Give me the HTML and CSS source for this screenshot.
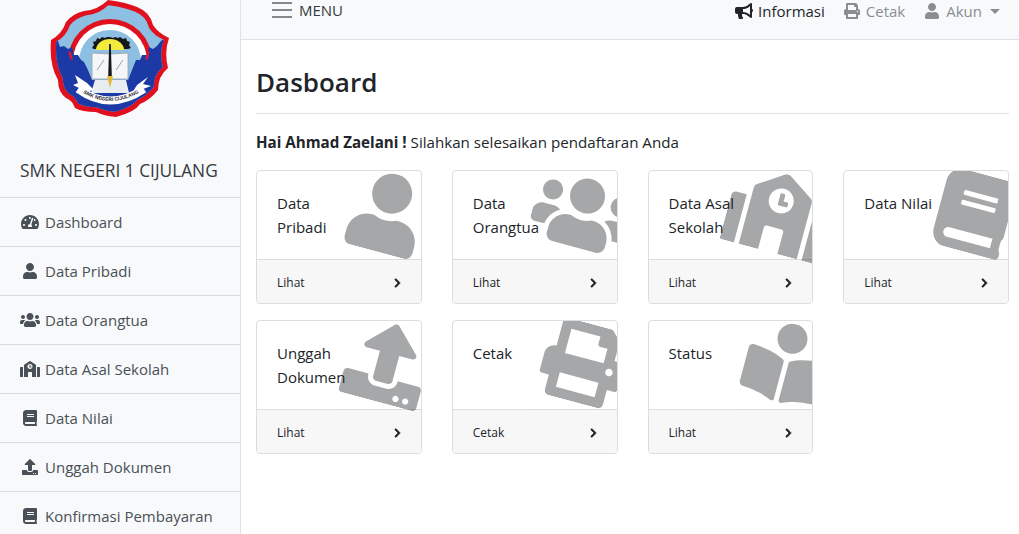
FILE: index.html
```html
<!DOCTYPE html>
<html lang="id">
<head>
<meta charset="utf-8">
<title>Dasboard</title>
<link rel="stylesheet" href="styles.css">
</head>
<body>
<svg class="defs" aria-hidden="true">
  <symbol id="i-user" viewBox="0 0 448 512"><path d="M224 256c70.7 0 128-57.3 128-128S294.7 0 224 0 96 57.3 96 128s57.3 128 128 128zm89.6 32h-16.7c-22.2 10.2-46.9 16-72.9 16s-50.6-5.8-72.9-16h-16.7C60.2 288 0 348.2 0 422.4V464c0 26.5 21.5 48 48 48h352c26.5 0 48-21.5 48-48v-41.6c0-74.2-60.2-134.4-134.4-134.4z"/></symbol>
  <symbol id="i-users" viewBox="0 0 640 512"><path d="M96 224c35.3 0 64-28.7 64-64s-28.7-64-64-64-64 28.7-64 64 28.7 64 64 64zm448 0c35.3 0 64-28.7 64-64s-28.7-64-64-64-64 28.7-64 64 28.7 64 64 64zm32 32h-64c-17.6 0-33.5 7.1-45.1 18.6 40.3 22.1 68.9 62 75.1 109.4h66c17.7 0 32-14.3 32-32v-32c0-35.3-28.7-64-64-64zm-256 0c61.9 0 112-50.1 112-112S381.9 32 320 32 208 82.1 208 144s50.1 112 112 112zm76.8 32h-8.3c-20.8 10-43.9 16-68.5 16s-47.6-6-68.5-16h-8.3C179.6 288 128 339.6 128 403.2V432c0 26.5 21.5 48 48 48h288c26.5 0 48-21.5 48-48v-28.8c0-63.6-51.6-115.2-115.2-115.2zm-223.7-13.4C161.5 263.1 145.6 256 128 256H64c-35.3 0-64 28.7-64 64v32c0 17.7 14.3 32 32 32h65.9c6.3-47.4 34.9-87.3 75.2-109.4z"/></symbol>
  <symbol id="i-book" viewBox="0 0 448 512"><path d="M448 360V24c0-13.3-10.7-24-24-24H96C43 0 0 43 0 96v320c0 53 43 96 96 96h328c13.3 0 24-10.7 24-24v-16c0-7.5-3.5-14.3-8.9-18.7-4.2-15.4-4.2-59.3 0-74.7 5.4-4.3 8.9-11.1 8.9-18.6zM128 134c0-3.3 2.7-6 6-6h212c3.3 0 6 2.7 6 6v20c0 3.3-2.7 6-6 6H134c-3.3 0-6-2.7-6-6v-20zm0 64c0-3.3 2.7-6 6-6h212c3.3 0 6 2.7 6 6v20c0 3.3-2.7 6-6 6H134c-3.3 0-6-2.7-6-6v-20zm253.4 250H96c-17.7 0-32-14.3-32-32 0-17.6 14.4-32 32-32h285.4c-1.9 17.1-1.9 46.9 0 64z"/></symbol>
  <symbol id="i-print" viewBox="0 0 512 512"><path d="M448 192V77.25c0-8.49-3.37-16.62-9.37-22.63L393.37 9.37c-6-6-14.14-9.37-22.63-9.37H96C78.33 0 64 14.33 64 32v160c-35.35 0-64 28.65-64 64v112c0 8.84 7.16 16 16 16h48v96c0 17.67 14.33 32 32 32h320c17.67 0 32-14.33 32-32v-96h48c8.84 0 16-7.16 16-16V256c0-35.35-28.65-64-64-64zm-64 256H128v-96h256v96zm0-224H128V64h192v48c0 8.84 7.16 16 16 16h48v96zm48 72c-13.25 0-24-10.75-24-24 0-13.26 10.75-24 24-24s24 10.74 24 24c0 13.25-10.75 24-24 24z"/></symbol>
  <symbol id="i-upload" viewBox="0 0 512 512"><path d="M296 384h-80c-13.3 0-24-10.7-24-24V192h-87.7c-17.8 0-26.7-21.5-14.1-34.1L242.3 5.7c7.5-7.5 19.8-7.5 27.3 0l152.2 152.2c12.6 12.6 3.7 34.1-14.1 34.1H320v168c0 13.3-10.7 24-24 24zm216-8v112c0 13.3-10.7 24-24 24H24c-13.3 0-24-10.7-24-24V376c0-13.3 10.7-24 24-24h136v8c0 30.9 25.1 56 56 56h80c30.9 0 56-25.1 56-56v-8h136c13.3 0 24 10.7 24 24zm-124 88c0-11-9-20-20-20s-20 9-20 20 9 20 20 20 20-9 20-20zm64 0c0-11-9-20-20-20s-20 9-20 20 9 20 20 20 20-9 20-20z"/></symbol>
  <symbol id="i-school" viewBox="0 0 640 512"><path d="M0 224v272c0 8.84 7.16 16 16 16h80V192H32c-17.67 0-32 14.33-32 32zm360-48h-24v-40c0-4.42-3.58-8-8-8h-16c-4.42 0-8 3.58-8 8v64c0 4.42 3.58 8 8 8h48c4.42 0 8-3.58 8-8v-16c0-4.42-3.58-8-8-8zm137.75-63.96l-160-106.67a32.02 32.02 0 0 0-35.5 0l-160 106.67A32.002 32.002 0 0 0 128 138.66V512h128V368c0-8.84 7.16-16 16-16h96c8.84 0 16 7.16 16 16v144h128V138.67c0-10.7-5.35-20.7-14.25-26.63zM320 256c-44.18 0-80-35.82-80-80s35.82-80 80-80 80 35.82 80 80-35.82 80-80 80zm288-64h-64v320h80c8.84 0 16-7.16 16-16V224c0-17.67-14.33-32-32-32z"/></symbol>
  <symbol id="i-reader" viewBox="0 0 512 512"><path d="M352 96c0-53.02-42.98-96-96-96s-96 42.98-96 96 42.98 96 96 96 96-42.98 96-96zM233.59 241.1c-59.33-36.32-155.43-46.3-203.79-49.05C13.55 191.13 0 203.51 0 219.14v222.8c0 14.33 11.59 26.28 26.49 27.05 43.66 2.29 131.99 10.68 193.04 41.43 9.37 4.72 20.48-1.71 20.48-11.87V252.56c-.01-4.67-2.32-8.95-6.42-11.46zm248.61-49.05c-48.35 2.74-144.46 12.73-203.78 49.05-4.1 2.51-6.41 6.96-6.41 11.63v245.79c0 10.19 11.14 16.63 20.54 11.9 61.04-30.72 149.32-39.11 192.97-41.4 14.9-.78 26.49-12.73 26.49-27.06V219.14c-.01-15.63-13.56-28.01-29.81-27.09z"/></symbol>
  <symbol id="i-gauge" viewBox="0 0 576 512"><path d="M288 32C128.94 32 0 160.94 0 320c0 52.8 14.25 102.26 39.06 144.8 5.61 9.62 16.3 15.2 27.44 15.2h443c11.14 0 21.83-5.58 27.44-15.2C561.75 422.26 576 372.8 576 320c0-159.06-128.94-288-288-288zm0 64c14.71 0 26.58 10.13 30.32 23.65-1.11 2.26-2.64 4.23-3.45 6.67l-9.22 27.67c-5.13 3.49-10.97 6.01-17.64 6.01-17.67 0-32-14.33-32-32S270.33 96 288 96zM96 384c-17.67 0-32-14.33-32-32s14.33-32 32-32 32 14.33 32 32-14.33 32-32 32zm48-160c-17.67 0-32-14.33-32-32s14.33-32 32-32 32 14.33 32 32-14.33 32-32 32zm246.77-72.41l-61.33 184C343.13 347.33 352 364.54 352 384c0 11.72-3.38 22.55-8.88 32H232.88c-5.5-9.45-8.88-20.28-8.88-32 0-33.94 26.5-61.43 59.9-63.59l61.34-184.01c4.17-12.56 17.73-19.45 30.36-15.17 12.57 4.19 19.35 17.79 15.17 30.36zm14.66 57.2l15.52-46.55c3.47-1.29 7.13-2.23 11.05-2.23 17.67 0 32 14.33 32 32s-14.33 32-32 32c-11.38-.01-20.89-6.28-26.57-15.22zM480 384c-17.67 0-32-14.33-32-32s14.33-32 32-32 32 14.33 32 32-14.33 32-32 32z"/></symbol>
  <symbol id="i-horn" viewBox="0 0 576 512"><path d="M576 240c0-23.63-12.95-44.04-32-55.12V32.01C544 23.26 537.02 0 512 0c-7.12 0-14.19 2.38-19.98 7.02l-85.03 68.03C364.28 109.19 310.66 128 256 128H64c-35.35 0-64 28.65-64 64v96c0 35.35 28.65 64 64 64h33.7c-1.39 10.48-2.18 21.14-2.18 32 0 39.77 9.26 77.35 25.56 110.94 5.19 10.69 16.52 17.06 28.4 17.06h74.28c26.05 0 41.69-29.84 25.9-50.56-16.4-21.52-26.15-48.36-26.15-77.44 0-11.11 1.62-21.79 4.41-32H256c54.66 0 108.28 18.81 150.98 52.95l85.03 68.03a32.023 32.023 0 0 0 19.98 7.02c24.92 0 32-22.78 32-32V295.13C563.05 284.04 576 263.63 576 240zm-96 141.42l-33.05-26.44C392.95 311.78 325.12 288 256 288v-96c69.12 0 136.95-23.78 190.95-66.98L480 98.58v282.84z"/></symbol>
  <symbol id="i-chev" viewBox="0 0 320 512"><path d="M285.476 272.971L91.132 467.314c-9.373 9.373-24.569 9.373-33.941 0l-22.667-22.667c-9.357-9.357-9.375-24.522-.04-33.901L188.505 256 34.484 101.255c-9.335-9.379-9.317-24.544.04-33.901l22.667-22.667c9.373-9.373 24.569-9.373 33.941 0L285.475 239.03c9.373 9.372 9.373 24.568.001 33.941z"/></symbol>
</svg>

<aside class="sidebar">
  <div class="brand">
    <svg class="logo" viewBox="50 0 120 118" role="img" aria-label="Logo SMK Negeri 1 Cijulang">
      <defs>
        <path id="shield" d="M108 0Q125 2 137 7Q150 12 153 25Q158 33 169 38Q164 52 168 68Q158 76 158 90Q150 100 140 104Q135 112 116 117Q104 116 96 112Q82 112 75 108Q72 100 66 98Q58 92 58 80Q49 65 51 40Q62 34 66 22Q72 14 84 11Q98 10 108 0Z"/>
        <clipPath id="inner"><use href="#shield" transform="translate(110 58) scale(.91) translate(-110 -58)"/></clipPath>
        <path id="arc" d="M80 91Q110 111 142 91"/>
      </defs>
      <use href="#shield" fill="#e0101e"/>
      <g clip-path="url(#inner)">
        <rect x="50" y="0" width="120" height="118" fill="#8cbfe2"/>
        <circle cx="110" cy="61" r="42" fill="#e0101e"/>
        <circle cx="110" cy="61" r="37" fill="#fff"/>
        <circle cx="110" cy="61" r="31" fill="#8cbfe2"/>
        <path fill="#1c3aa6" d="M50 38L58 41L60 47L64 46L68 49L72 47L74 55L78 55L81 60L84 62L88 70L92 80L128 80L132 70L136 60L140 60L142 55L147 55L149 47L153 49L157 46L161 41L168 36L172 118L50 118Z"/>
        <path fill="#d01c3a" d="M68 51l3 1 2 8-3-1zM150 51l-3 1-2 8 3-1z"/>
      </g>
      <path fill="#16181c" d="M92 48l2-3-1-3 3-1 1-3 3 1 2-2 3 1 2-1 3 0 3 1 2-1 3 1 2-1 3 2 3-1 1 3 3 1-1 3 2 3-3 1-34 0z"/>
      <path fill="#f3ea3e" d="M96 50a14 11 0 0 1 28 0z"/>
      <path fill="#f4f6f8" stroke="#9aa0a8" stroke-width=".8" d="M92 53l18 1 18-1v26H92z"/>
      <path stroke="#9aa0a8" fill="none" d="M97 70l7-10M116 70l7-10"/>
      <path fill="#e8edf2" d="M95 80h31l3 13H91z"/>
      <path fill="#16181c" d="M109.2 44h1.6l1 32h-3.6z"/>
      <path fill="#e4b93a" d="M107 76h6l-3 12z"/>
      <path fill="#fff" d="M75 75l12 8 7 7-14 3-1-5-6-3 5-2zM148 77l-5 7 8 2-8 3 1 5-12-1 5-8z"/>
      <path d="M78 89Q110 112 144 89" fill="none" stroke="#fff" stroke-width="8"/>
      <text class="logo-text"><textPath href="#arc" startOffset="50%" text-anchor="middle">SMK NEGERI CIJULANG</textPath></text>
    </svg>
    <div class="school">SMK NEGERI 1 CIJULANG</div>
  </div>
  <nav class="menu">
    <a class="menu-item"><svg class="mi"><use href="#i-gauge"/></svg>Dashboard</a>
    <a class="menu-item"><svg class="mi"><use href="#i-user"/></svg>Data Pribadi</a>
    <a class="menu-item"><svg class="mi"><use href="#i-users"/></svg>Data Orangtua</a>
    <a class="menu-item"><svg class="mi"><use href="#i-school"/></svg>Data Asal Sekolah</a>
    <a class="menu-item"><svg class="mi"><use href="#i-book"/></svg>Data Nilai</a>
    <a class="menu-item"><svg class="mi"><use href="#i-upload"/></svg>Unggah Dokumen</a>
    <a class="menu-item"><svg class="mi"><use href="#i-book"/></svg>Konfirmasi Pembayaran</a>
  </nav>
</aside>

<div class="main">
  <header class="topbar">
    <div class="toggle"><span class="burger"><i></i><i></i><i></i></span>MENU</div>
    <div class="links">
      <a class="link link-active"><svg class="li"><use href="#i-horn"/></svg>Informasi</a>
      <a class="link"><svg class="li"><use href="#i-print"/></svg>Cetak</a>
      <a class="link"><svg class="li"><use href="#i-user"/></svg>Akun<span class="caret"></span></a>
    </div>
  </header>
  <main class="content">
    <h1 class="title">Dasboard</h1>
    <p class="greet"><b>Hai Ahmad Zaelani !</b> Silahkan selesaikan pendaftaran Anda</p>
    <div class="cards">
      <section class="card"><svg class="card-icon"><use href="#i-user"/></svg><div class="card-body">Data<br>Pribadi</div><div class="card-foot">Lihat<svg class="chev"><use href="#i-chev"/></svg></div></section>
      <section class="card"><svg class="card-icon"><use href="#i-users"/></svg><div class="card-body">Data<br>Orangtua</div><div class="card-foot">Lihat<svg class="chev"><use href="#i-chev"/></svg></div></section>
      <section class="card"><svg class="card-icon"><use href="#i-school"/></svg><div class="card-body">Data Asal<br>Sekolah</div><div class="card-foot">Lihat<svg class="chev"><use href="#i-chev"/></svg></div></section>
      <section class="card"><svg class="card-icon"><use href="#i-book"/></svg><div class="card-body">Data Nilai</div><div class="card-foot">Lihat<svg class="chev"><use href="#i-chev"/></svg></div></section>
      <section class="card"><svg class="card-icon"><use href="#i-upload"/></svg><div class="card-body">Unggah<br>Dokumen</div><div class="card-foot">Lihat<svg class="chev"><use href="#i-chev"/></svg></div></section>
      <section class="card"><svg class="card-icon"><use href="#i-print"/></svg><div class="card-body">Cetak</div><div class="card-foot">Cetak<svg class="chev"><use href="#i-chev"/></svg></div></section>
      <section class="card"><svg class="card-icon card-icon-reader"><use href="#i-reader"/></svg><div class="card-body">Status</div><div class="card-foot">Lihat<svg class="chev"><use href="#i-chev"/></svg></div></section>
    </div>
  </main>
</div>
</body>
</html>
```

FILE: styles.css
```css
* { box-sizing: border-box; }
html, body { margin: 0; height: 100%; }
body {
  display: flex;
  height: 534px;
  overflow: hidden;
  background: #fff;
  color: #212529;
  font-family: "Open Sans", "Liberation Sans", sans-serif;
  font-size: 15px;
  line-height: 24px;
}
.defs { position: absolute; width: 0; height: 0; }
svg { fill: currentColor; }

.sidebar {
  flex: 0 0 241px;
  height: 534px;
  overflow: hidden;
  background: #f8f9fa;
  border-right: 1px solid #dee2e6;
}
.brand { border-bottom: 1px solid #d8dbde; height: 198px; }
.logo { display: block; width: 120px; height: 118px; margin: 0 0 39px 50px; }
.logo-text { font-size: 5px; font-weight: 700; fill: #1b2030; font-family: "Liberation Sans", sans-serif; }
.school { margin-left: 20px; font-size: 17.3px; line-height: 27px; font-weight: 400; color: #343a40; white-space: nowrap; }
.menu-item {
  display: flex;
  align-items: center;
  height: 49px;
  padding: 0 0 1px 20px;
  border-bottom: 1px solid #d8dbde;
  color: #495057;
}
.mi { width: 20px; height: 16px; margin-right: 5px; flex: none; }

.main { flex: 1; min-width: 0; display: flex; flex-direction: column; }
.topbar {
  flex: none;
  height: 40px;
  display: flex;
  justify-content: space-between;
  padding: 0 19px 0 31px;
  align-items: flex-start;
  line-height: 22px;
  background: #f8f9fa;
  border-bottom: 1px solid #dee2e6;
}
.toggle { display: flex; align-items: center; color: #343a40; margin-top: -1px; }
.burger { display: flex; flex-direction: column; gap: 5px; width: 20px; margin-right: 7px; }
.burger i { display: block; height: 2px; background: #858789; }
.links { display: flex; gap: 18px; align-items: center; }
.link { display: flex; align-items: center; color: #8a8e92; }
.link-active { color: #212529; }
.li { width: 18px; height: 16px; margin-right: 5px; }
.caret { width: 0; height: 0; margin-left: 8px; border: 5px solid transparent; border-top-color: #8a8e92; border-bottom: 0; }

.content { flex: 1; padding: 22px 10px 0 15px; }
.title {
  margin: 0 0 16px;
  padding-bottom: 11px;
  border-bottom: 1px solid #dee2e6;
  font-size: 26px;
  line-height: 40px;
  font-weight: 600;
  color: #212529;
}
.greet { margin: 0 0 16px; font-size: 15.15px; }
.greet b { font-weight: 700; }
.cards { display: grid; grid-template-columns: repeat(4, 1fr); column-gap: 30px; row-gap: 16px; }
.card {
  position: relative;
  overflow: hidden;
  background: #fff;
  border: 1px solid #dcdddf;
  border-radius: 4px;
}
.card-icon {
  position: absolute;
  top: 2px;
  right: -16px;
  width: 100px;
  height: 80px;
  opacity: .4;
  color: #212529;
  transform: rotate(15deg);
}
.card-icon-reader { right: -24px; }
.card-body { position: relative; z-index: 1; height: 88px; padding: 20px 20px 0; }
.card-foot {
  display: flex;
  justify-content: space-between;
  align-items: center;
  height: 44px;
  padding: 2px 20px 0;
  border-top: 1px solid #dcdddf;
  background: #f7f7f7;
  font-size: 12px;
}
.chev { width: 7px; height: 10px; color: #212529; stroke: currentColor; stroke-width: 36px; }
```
